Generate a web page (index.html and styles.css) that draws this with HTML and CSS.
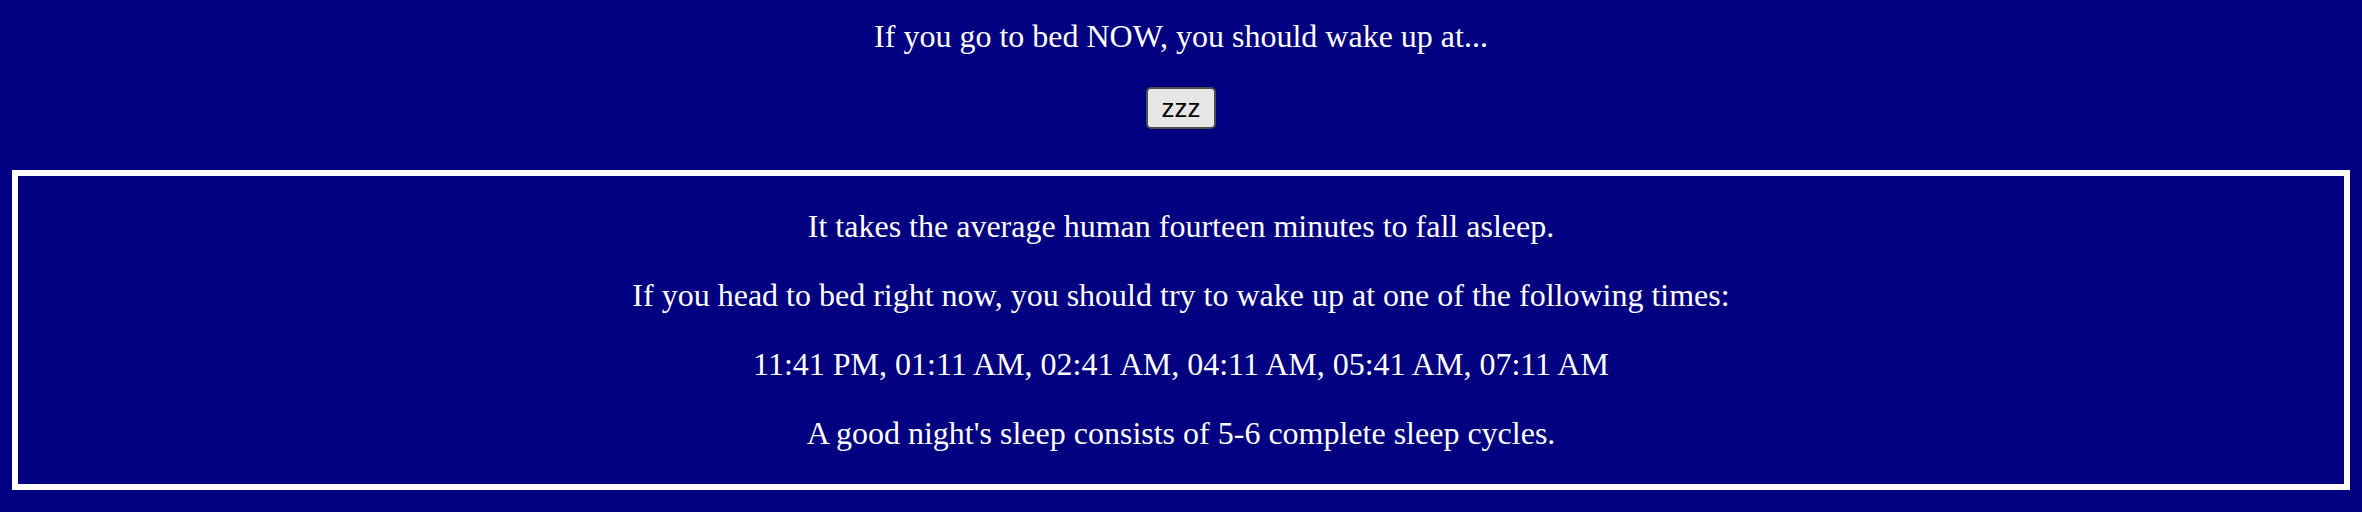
FILE: index.html
```html
<!DOCTYPE html>
<html>
<head>
<meta charset="utf-8">
<link rel="stylesheet" href="styles.css">
</head>
<body>
<div class="top">
  <p class="lead">If you go to bed NOW, you should wake up at...</p>
  <button class="zzz">zzz</button>
</div>
<div class="box">
  <p>It takes the average human fourteen minutes to fall asleep.</p>
  <p>If you head to bed right now, you should try to wake up at one of the following times:</p>
  <p>11:41 PM, 01:11 AM, 02:41 AM, 04:11 AM, 05:41 AM, 07:11 AM</p>
  <p>A good night's sleep consists of 5-6 complete sleep cycles.</p>
</div>
</body>
</html>
```

FILE: styles.css
```css
html, body {
  margin: 0;
  padding: 0;
  background: #000080;
}
body {
  color: #ffffff;
  font-family: "Liberation Serif", "Times New Roman", serif;
  font-size: 32px;
  text-align: center;
}
.top {
  padding-top: 18px;
}
.lead {
  margin: 0 0 32px 0;
}
.zzz {
  font-family: "Liberation Sans", Arial, sans-serif;
  font-size: 26px;
  line-height: 30px;
  padding: 4px 13px;
  border: 2px solid #4d4d4d;
  border-radius: 5px;
  background: #e6e6e6;
  color: #000000;
  width: 70px;
  height: 42px;
  box-sizing: border-box;
  display: block;
  margin: 0 auto;
}
.box {
  margin: 41px 12px 0 12px;
  border: 6px solid #ffffff;
}
.box p {
  margin: 32px 0;
}
```
